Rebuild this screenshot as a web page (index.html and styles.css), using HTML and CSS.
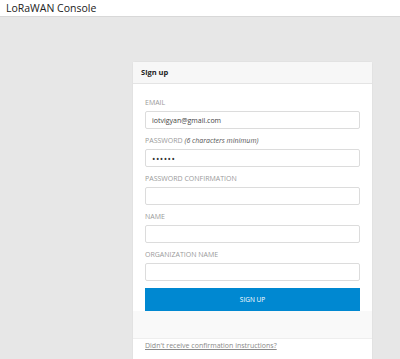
FILE: index.html
```html
<!DOCTYPE html>
<html lang="en">
<head>
    <meta charset="UTF-8">
    <meta name="viewport" content="width=device-width, initial-scale=1.0">
    <title>LoRaWAN Console</title>
    <link rel="stylesheet" href="styles.css">
</head>
<body>
    <div class="topbar">LoRaWAN Console</div>

    <div class="page">
        <div class="card">
            <div class="card-header">Sign up</div>

            <form class="card-body">
                <div class="form-group">
                    <label for="email">EMAIL</label>
                    <input type="text" id="email" value="iotvigyan@gmail.com">
                </div>
                <div class="form-group">
                    <label for="password">PASSWORD <em>(6 characters minimum)</em></label>
                    <input type="password" id="password" value="secret">
                </div>
                <div class="form-group">
                    <label for="confirm">PASSWORD CONFIRMATION</label>
                    <input type="password" id="confirm">
                </div>
                <div class="form-group">
                    <label for="name">NAME</label>
                    <input type="text" id="name">
                </div>
                <div class="form-group">
                    <label for="org">ORGANIZATION NAME</label>
                    <input type="text" id="org">
                </div>
                <button type="submit">SIGN UP</button>
            </form>

            <div class="card-footer"></div>

            <div class="card-links">
                <a href="#">Didn't receive confirmation instructions?</a>
            </div>
        </div>
    </div>
</body>
</html>
```

FILE: styles.css
```css
html, body {
    margin: 0;
    padding: 0;
    height: 100%;
}
body {
    font-family: "Open Sans", "Noto Sans", sans-serif;
    background: #e7e7e7;
    overflow: hidden;
}
.topbar {
    height: 17px;
    background: white;
    border-bottom: 1px solid #d8d8d8;
    box-sizing: border-box;
    padding-left: 6px;
    font-size: 10.5px;
    line-height: 16px;
    color: #222;
}
.page {
    padding: 44px 0 0 132px;
}
.card {
    width: 241px;
    background: white;
    border: 1px solid #e2e2e2;
    border-radius: 3px;
    box-sizing: border-box;
}
.card-header {
    height: 21px;
    background: #f7f7f7;
    border-bottom: 1px solid #e4e4e4;
    padding-left: 8px;
    font-size: 7.5px;
    font-weight: bold;
    line-height: 21px;
    color: #222;
}
.card-body {
    padding: 14px 12px 0 12px;
    display: flex;
    flex-direction: column;
    gap: 7px;
}
.form-group label {
    display: block;
    font-size: 7px;
    line-height: 10px;
    color: #9a9a9a;
    margin-bottom: 3px;
}
.form-group label em {
    color: #555;
}
.form-group input {
    display: block;
    width: 100%;
    height: 18px;
    padding: 0 6px;
    border: 1px solid #dcdcdc;
    border-radius: 2px;
    box-sizing: border-box;
    font-family: inherit;
    font-size: 7px;
    color: #444;
}
.form-group input[type="password"] {
    font-size: 9px;
    letter-spacing: 0.5px;
    color: #333;
}
button {
    height: 23px;
    background: #0088d1;
    color: white;
    border: none;
    font-family: inherit;
    font-size: 6.5px;
    cursor: pointer;
}
.card-footer {
    height: 27px;
    background: #f9f9f9;
    border-bottom: 1px solid #eeeeee;
}
.card-links {
    padding: 1px 12px 20px 12px;
    font-size: 7px;
    line-height: 12px;
}
.card-links a {
    color: #8a8a8a;
}
```
